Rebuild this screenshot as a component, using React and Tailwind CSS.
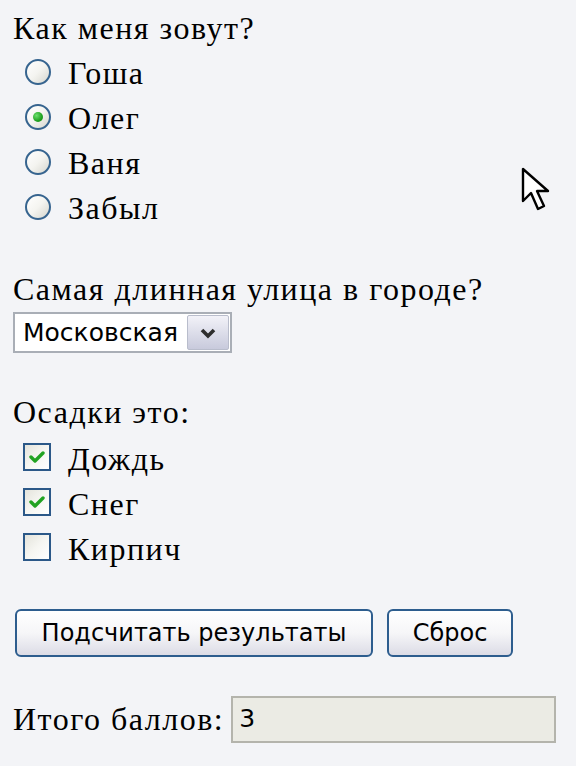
import { useState } from "react";

const serif = "font-['Liberation_Serif','Times_New_Roman',serif]";
const sans = "font-['DejaVu_Sans','Liberation_Sans',sans-serif]";

function Radio({ checked }) {
  return (
    <span className="relative flex items-center justify-center w-[26px] h-[26px] rounded-full border-2 border-[#36648f] bg-gradient-to-br from-white via-[#f4f4f0] to-[#d6d6ce] shrink-0">
      {checked && (
        <span className="w-[10px] h-[10px] rounded-full bg-[radial-gradient(circle_at_35%_35%,#6ee06e,#1fa11f_60%,#168416)]"></span>
      )}
    </span>
  );
}

function Checkbox({ checked }) {
  return (
    <span className="flex items-center justify-center w-[28px] h-[28px] border-2 border-[#2b5888] bg-gradient-to-br from-[#e4e4dc] via-[#f6f6f2] to-white shrink-0">
      {checked && (
        <svg width="16" height="14" viewBox="0 0 16 14">
          <path d="M2 7 L6 11 L14 3" fill="none" stroke="#22a322" strokeWidth="3.4" strokeLinecap="round" strokeLinejoin="round" />
        </svg>
      )}
    </span>
  );
}

function App() {
  const [name] = useState("Олег");
  const names = ["Гоша", "Олег", "Ваня", "Забыл"];
  const rain = [
    { label: "Дождь", on: true },
    { label: "Снег", on: true },
    { label: "Кирпич", on: false },
  ];

  return (
    <div className={`relative min-h-[766px] bg-[#f3f4f7] pl-[13px] pt-[6px] text-black text-[32px] tracking-[1.5px] ${serif}`}>
      <div className="h-[45px] leading-[45px]">Как меня зовут?</div>
      {names.map((n) => (
        <div key={n} className="flex items-center h-[45px] pl-[12px] gap-[17px]">
          <span className="-mt-[4px]">
            <Radio checked={n === name} />
          </span>
          <span className="leading-[45px]">{n}</span>
        </div>
      ))}

      <div className="mt-[36px] h-[45px] leading-[45px]">Самая длинная улица в городе?</div>
      <div className="flex w-[219px] h-[41px] border-2 border-[#a9aeb6] bg-white tracking-normal">
        <span className={`flex-1 flex items-center pl-[8px] text-[25px] ${sans}`}>Московская</span>
        <span className="flex items-center justify-center w-[42px] m-px border border-[#b9bdcc] rounded-[2px] bg-gradient-to-b from-[#f2f2f8] to-[#c8cadc]">
          <svg width="18" height="12" viewBox="0 0 18 12">
            <path d="M3 3 L9 9 L15 3" fill="none" stroke="#2e2e2e" strokeWidth="3.6" />
          </svg>
        </span>
      </div>

      <div className="mt-[37px] h-[45px] leading-[45px]">Осадки это:</div>
      <div className="mt-[2px]">
        {rain.map((r) => (
          <div key={r.label} className="flex items-center h-[45px] pl-[10px] gap-[17px]">
            <span className="-mt-[6px]">
              <Checkbox checked={r.on} />
            </span>
            <span className="leading-[45px]">{r.label}</span>
          </div>
        ))}
      </div>

      <div className={`flex gap-[14px] mt-[37px] pl-[2px] text-[24px] tracking-normal ${sans}`}>
        <button className="w-[358px] h-[48px] rounded-[6px] border-2 border-[#2d5d8e] bg-gradient-to-b from-white via-[#f6f6f8] to-[#dcdce6]">
          Подсчитать результаты
        </button>
        <button className="w-[126px] h-[48px] rounded-[6px] border-2 border-[#2d5d8e] bg-gradient-to-b from-white via-[#f6f6f8] to-[#dcdce6]">
          Сброс
        </button>
      </div>

      <div className="flex items-center gap-[7px] mt-[38px]">
        <span>Итого баллов:</span>
        <div className={`flex items-center w-[325px] h-[47px] border-2 border-[#b4b4ac] bg-[#ebebe4] pl-[6px] text-[25px] tracking-normal ${sans}`}>3</div>
      </div>

      <svg className="absolute left-[521px] top-[167px]" width="30" height="50" viewBox="0 0 30 50">
        <path d="M2 2 L2 34 L10 26 L17 42 L23 39 L16 24 L27 24 Z" fill="white" stroke="black" strokeWidth="2.4" strokeLinejoin="round" />
      </svg>
    </div>
  );
}

export default App;
